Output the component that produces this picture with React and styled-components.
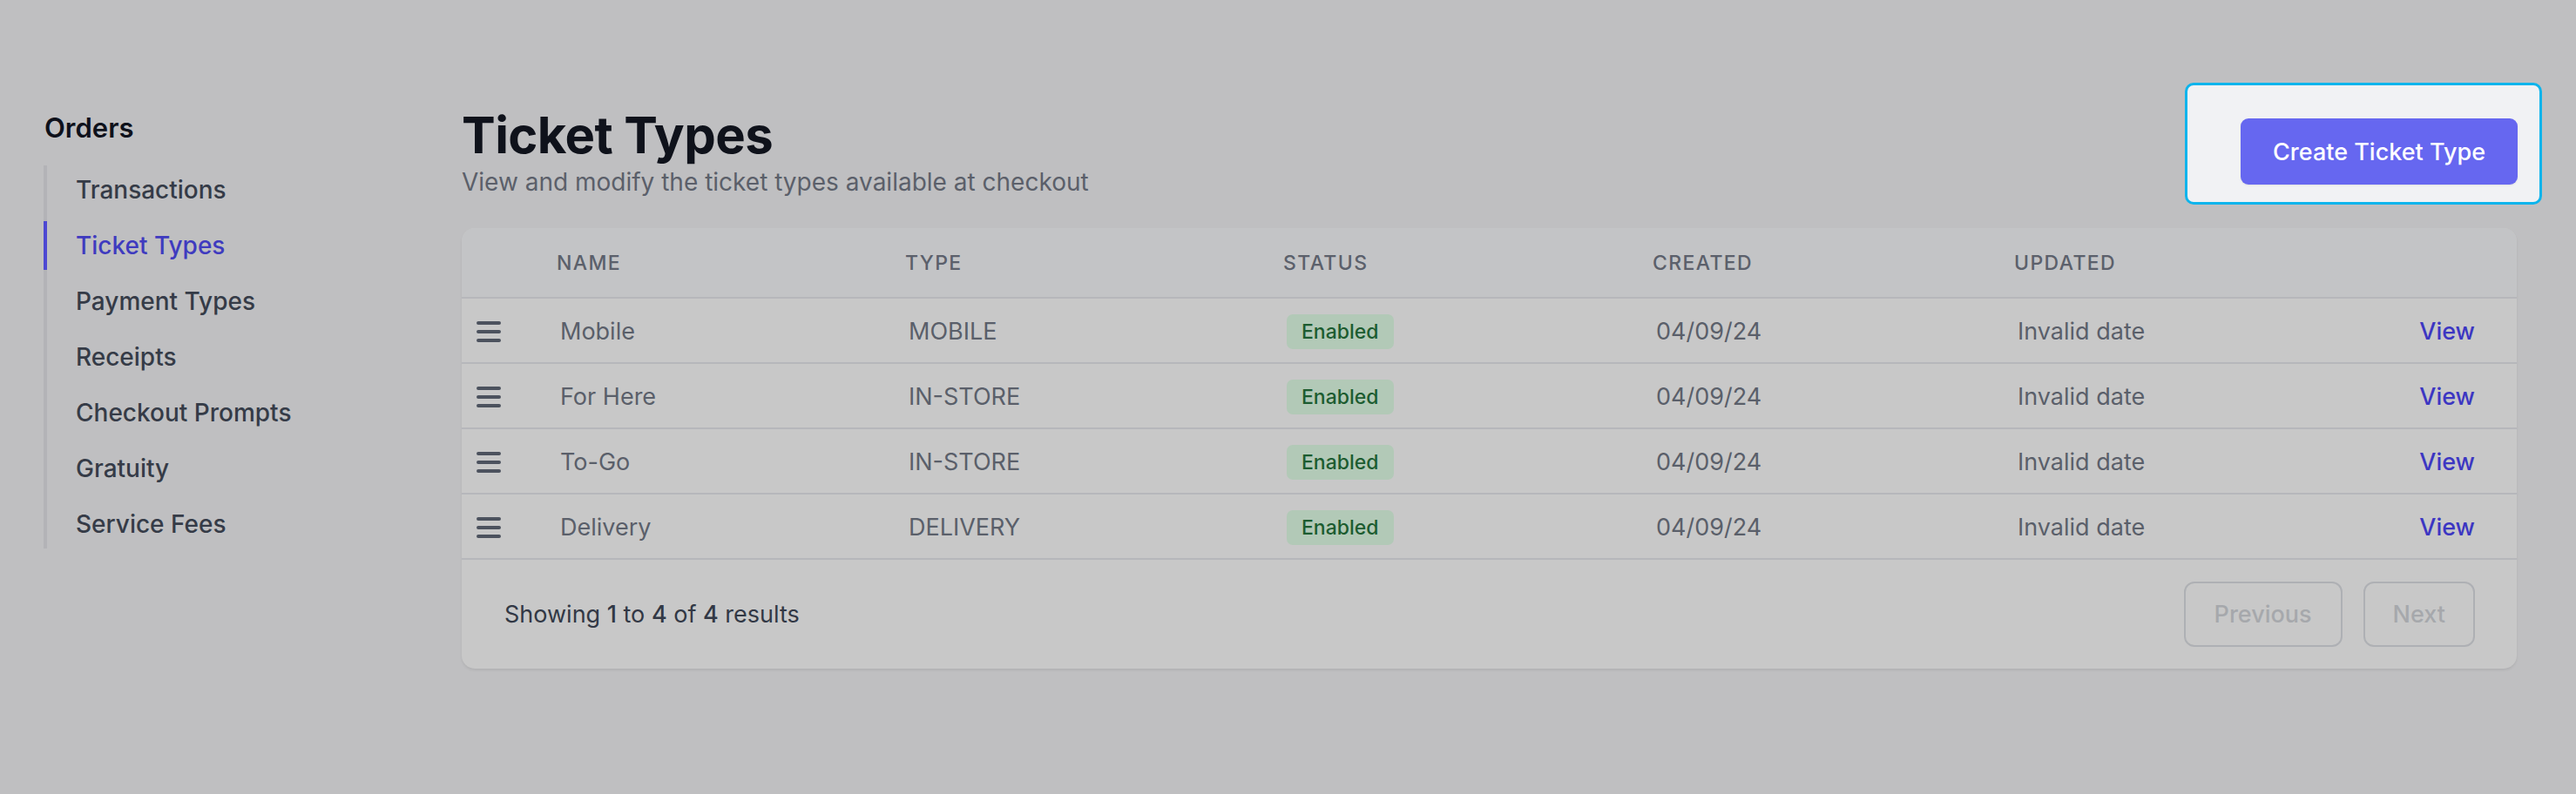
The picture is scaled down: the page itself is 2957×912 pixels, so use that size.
import React from 'react'
import styled, { createGlobalStyle } from 'styled-components'

const GlobalStyle = createGlobalStyle`
    html, body {
        margin: 0;
        padding: 0;
        background: #bfbfc1;
    }
    body {
        font-family: Inter, "Noto Sans", "Liberation Sans", sans-serif;
        -webkit-font-smoothing: antialiased;
    }
    * {
        box-sizing: border-box;
    }
`

const Page = styled.div`
    display: flex;
    min-height: 912px;
    padding: 95px 68px 0 50px;
    background: #bfbfc1;
`

const Sidebar = styled.aside`
    width: 480px;
    flex-shrink: 0;
    padding-top: 29px;
`

const SideTitle = styled.div`
    font-size: 31px;
    line-height: 45px;
    font-weight: 600;
    color: #0e111b;
    padding-left: 1px;
`

const Nav = styled.nav`
    margin-top: 21px;
    border-left: 4px solid #b3b3b7;
    display: flex;
    flex-direction: column;
    gap: 8px;
`

const NavItem = styled.div`
    margin-left: -4px;
    border-left: 4px solid ${p => (p.$active ? '#4d48d2' : 'transparent')};
    padding: 8px 0 8px 33px;
    font-size: 28px;
    line-height: 40px;
    font-weight: 500;
    color: ${p => (p.$active ? '#3f3bbf' : '#353b47')};
`

const Main = styled.main`
    flex: 1;
    min-width: 0;
`

const HeaderRow = styled.div`
    display: flex;
    justify-content: space-between;
    align-items: flex-start;
`

const TitleBlock = styled.div`
    padding-top: 26px;
`

const Title = styled.h1`
    margin: 0;
    font-size: 58px;
    line-height: 68px;
    font-weight: 700;
    letter-spacing: -0.01em;
    color: #0f121b;
`

const Subtitle = styled.p`
    margin: 0;
    font-size: 28px;
    line-height: 40px;
    color: #5b5f6a;
`

const Spotlight = styled.div`
    margin-right: -29px;
    padding: 38px 25px 20px 61px;
    background: #f1f2f4;
    border: 3px solid #0cb4ec;
    border-radius: 10px;
`

const PrimaryButton = styled.button`
    height: 76px;
    padding: 0 37px;
    border: none;
    border-radius: 9px;
    background: #6667f0;
    color: #ffffff;
    font-family: inherit;
    font-size: 27px;
    font-weight: 500;
    box-shadow: 0 1px 2px rgba(0, 0, 0, 0.08);
`

const Card = styled.section`
    margin-top: 27px;
    background: #c8c8c8;
    border-radius: 15px;
    overflow: hidden;
    box-shadow: 0 2px 3px rgba(0, 0, 0, 0.07);
`

const columns = '109px 400px 434px 424px 415px 1fr auto'

const HeadRow = styled.div`
    display: grid;
    grid-template-columns: ${columns};
    align-items: center;
    height: 81px;
    padding-right: 48px;
    background: #c3c4c6;
    border-bottom: 2px solid #b6b7bb;
`

const HeadCell = styled.div`
    font-size: 23px;
    font-weight: 500;
    letter-spacing: 0.06em;
    text-transform: uppercase;
    color: #5b606b;
`

const Row = styled.div`
    display: grid;
    grid-template-columns: ${columns};
    align-items: center;
    height: 75px;
    padding: 2px 48px 0 0;
    border-bottom: 2px solid #b6b7bb;
`

const Cell = styled.div`
    padding-left: 4px;
    font-size: 27px;
    line-height: 40px;
    color: #5a5f6a;
`

const Handle = styled.div`
    padding-left: 17px;
    display: flex;
    align-items: center;
    color: #4c525e;
`

const Badge = styled.span`
    display: inline-block;
    height: 40px;
    padding: 0 17px;
    border-radius: 7px;
    background: #b2c9b7;
    color: #1c5c30;
    font-size: 23px;
    line-height: 40px;
    font-weight: 500;
`

const ViewLink = styled.a`
    font-size: 27px;
    font-weight: 500;
    color: #3c36c2;
    text-decoration: none;
    text-align: right;
`

const Footer = styled.div`
    display: flex;
    justify-content: space-between;
    align-items: center;
    height: 125px;
    padding: 0 48px 0 49px;
`

const Results = styled.p`
    margin: 0;
    font-size: 27px;
    color: #323845;

    b {
        font-weight: 500;
    }
`

const Pager = styled.div`
    display: flex;
    gap: 24px;
`

const PageButton = styled.button`
    height: 75px;
    padding: 0 ${p => p.$px}px;
    background: transparent;
    border: 2px solid #aeb0b4;
    border-radius: 12px;
    color: #a6a8ac;
    font-family: inherit;
    font-size: 27px;
    font-weight: 500;
`

const MenuIcon = () => (
    <svg width="28" height="24" viewBox="0 0 28 24" fill="none">
        <path d="M2 2h24M2 12h24M2 22h24" stroke="currentColor" strokeWidth="4" strokeLinecap="round" />
    </svg>
)

const navItems = ['Transactions', 'Ticket Types', 'Payment Types', 'Receipts', 'Checkout Prompts', 'Gratuity', 'Service Fees']

const ticketTypes = [
    { name: 'Mobile', type: 'MOBILE' },
    { name: 'For Here', type: 'IN-STORE' },
    { name: 'To-Go', type: 'IN-STORE' },
    { name: 'Delivery', type: 'DELIVERY' },
]

export default function App() {
    return (
        <>
            <GlobalStyle />
            <Page>
                <Sidebar>
                    <SideTitle>Orders</SideTitle>
                    <Nav>
                        {navItems.map(item => (
                            <NavItem key={item} $active={item === 'Ticket Types'}>
                                {item}
                            </NavItem>
                        ))}
                    </Nav>
                </Sidebar>

                <Main>
                    <HeaderRow>
                        <TitleBlock>
                            <Title>Ticket Types</Title>
                            <Subtitle>View and modify the ticket types available at checkout</Subtitle>
                        </TitleBlock>
                        <Spotlight>
                            <PrimaryButton>Create Ticket Type</PrimaryButton>
                        </Spotlight>
                    </HeaderRow>

                    <Card>
                        <HeadRow>
                            <div />
                            <HeadCell>Name</HeadCell>
                            <HeadCell>Type</HeadCell>
                            <HeadCell>Status</HeadCell>
                            <HeadCell>Created</HeadCell>
                            <HeadCell>Updated</HeadCell>
                            <div />
                        </HeadRow>

                        {ticketTypes.map(t => (
                            <Row key={t.name}>
                                <Handle>
                                    <MenuIcon />
                                </Handle>
                                <Cell>{t.name}</Cell>
                                <Cell>{t.type}</Cell>
                                <Cell>
                                    <Badge>Enabled</Badge>
                                </Cell>
                                <Cell>04/09/24</Cell>
                                <Cell>Invalid date</Cell>
                                <ViewLink href="#">View</ViewLink>
                            </Row>
                        ))}

                        <Footer>
                            <Results>
                                Showing <b>1</b> to <b>4</b> of <b>4</b> results
                            </Results>
                            <Pager>
                                <PageButton $px={33}>Previous</PageButton>
                                <PageButton $px={32}>Next</PageButton>
                            </Pager>
                        </Footer>
                    </Card>
                </Main>
            </Page>
        </>
    )
}
